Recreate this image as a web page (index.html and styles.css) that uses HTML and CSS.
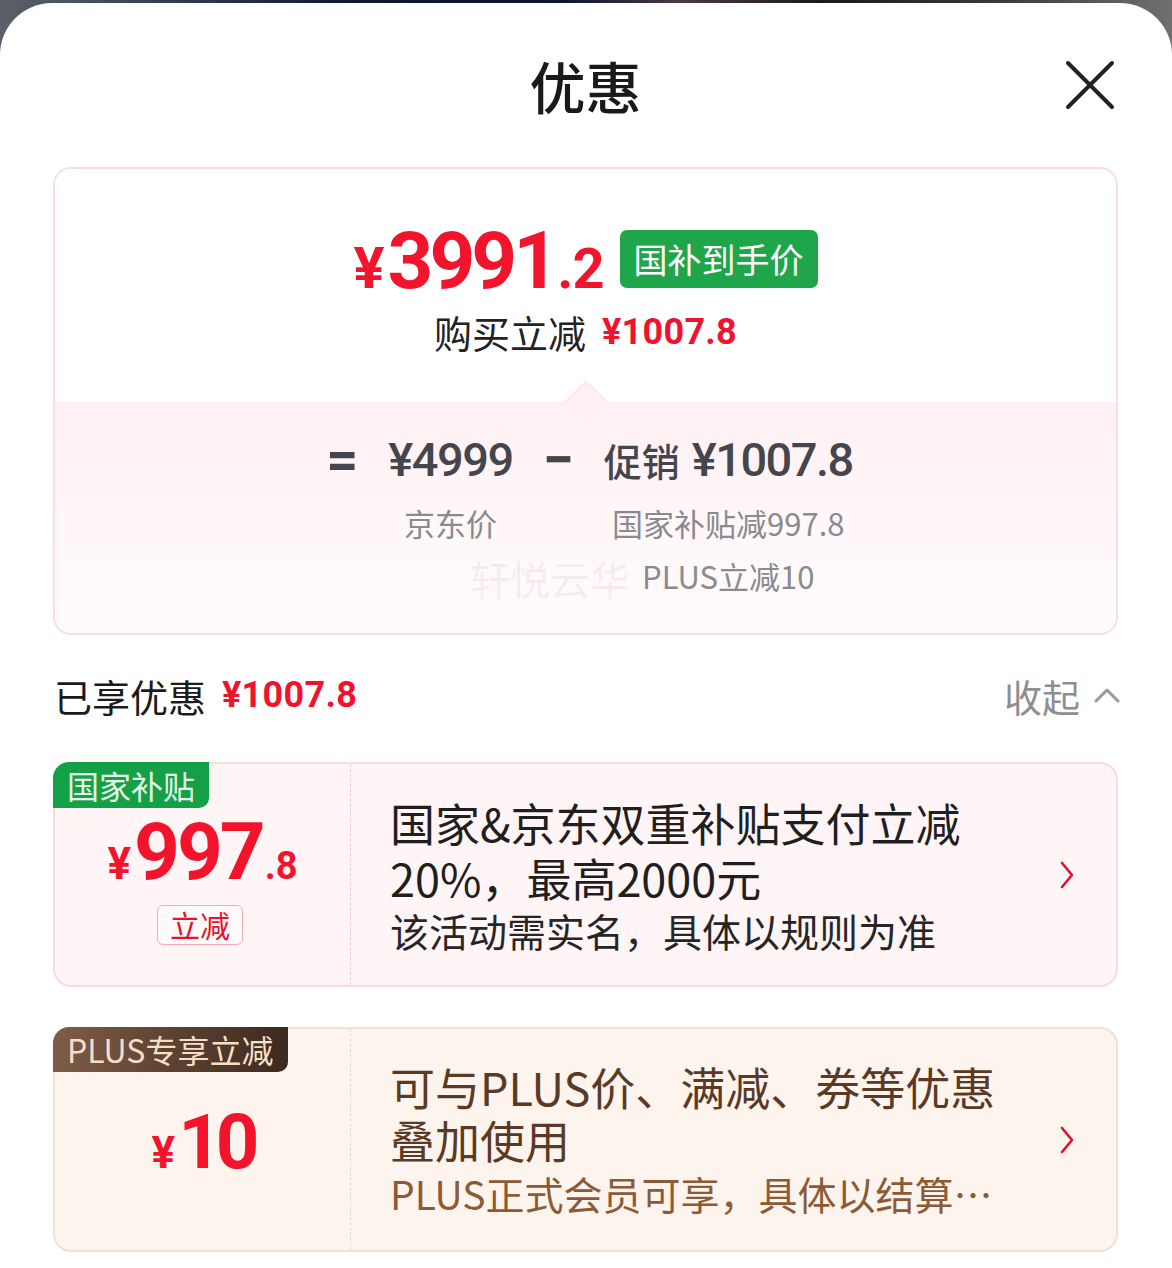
FILE: index.html
```html
<!DOCTYPE html>
<html lang="zh-CN">
<head>
<meta charset="utf-8">
<title>优惠</title>
<link rel="stylesheet" href="styles.css">
</head>
<body>
<div class="sheet">
  <header class="header">
    <span class="header-spacer"></span>
    <h1 class="title">优惠</h1>
    <button class="close" aria-label="关闭">
      <svg width="50" height="50" viewBox="0 0 50 50"><path d="M3 3 L47 47 M47 3 L3 47" stroke="#222" stroke-width="4" stroke-linecap="round" fill="none"/></svg>
    </button>
  </header>

  <section class="summary">
    <div class="summary-top">
      <div class="final">
        <span class="final-price"><span class="yen">¥</span><span class="int">3991</span><span class="dec">.2</span></span>
        <span class="final-badge">国补到手价</span>
      </div>
      <div class="saving">购买立减<span class="red-price">¥1007.8</span></div>
    </div>
    <div class="summary-bottom">
      <div class="formula">
        <span class="op">=</span>
        <div class="term">
          <div class="term-main">¥4999</div>
          <div class="term-note">京东价</div>
        </div>
        <span class="op">−</span>
        <div class="term">
          <div class="term-main"><span class="cn">促销</span>¥1007.8</div>
          <div class="term-note">国家补贴减997.8</div>
          <div class="term-note">PLUS立减10</div>
        </div>
      </div>
      <span class="watermark">轩悦云华</span>
    </div>
  </section>

  <div class="enjoyed">
    <div class="enjoyed-label">已享优惠<span class="red-price">¥1007.8</span></div>
    <div class="collapse">收起
      <svg width="26" height="18" viewBox="0 0 26 18"><path d="M2 15 L13 4 L24 15" stroke="#9a9a9a" stroke-width="3" fill="none" stroke-linecap="round" stroke-linejoin="round"/></svg>
    </div>
  </div>

  <div class="coupon coupon-gov">
    <span class="coupon-tag">国家补贴</span>
    <div class="coupon-left">
      <div class="coupon-amount"><span class="yen">¥</span><span class="int">997</span><span class="dec">.8</span></div>
      <span class="coupon-type">立减</span>
    </div>
    <div class="coupon-body">
      <div class="coupon-title">国家&amp;京东双重补贴支付立减<br>20%，最高2000元</div>
      <div class="coupon-desc">该活动需实名，具体以规则为准</div>
    </div>
    <svg class="chev" width="18" height="30" viewBox="0 0 18 30"><path d="M4 3 L14 15 L4 27" stroke="#e0102a" stroke-width="2.6" fill="none" stroke-linecap="round" stroke-linejoin="round"/></svg>
  </div>

  <div class="coupon coupon-plus">
    <span class="coupon-tag">PLUS专享立减</span>
    <div class="coupon-left">
      <div class="coupon-amount"><span class="yen">¥</span><span class="int">10</span></div>
    </div>
    <div class="coupon-body">
      <div class="coupon-title">可与PLUS价、满减、券等优惠<br>叠加使用</div>
      <div class="coupon-desc">PLUS正式会员可享，具体以结算…</div>
    </div>
    <svg class="chev" width="18" height="30" viewBox="0 0 18 30"><path d="M4 3 L14 15 L4 27" stroke="#e0102a" stroke-width="2.6" fill="none" stroke-linecap="round" stroke-linejoin="round"/></svg>
  </div>
</div>
</body>
</html>
```

FILE: styles.css
```css
* { box-sizing: border-box; }

html, body {
  margin: 0;
  height: 100%;
}

body {
  overflow: hidden;
  font-family: "Noto Sans CJK SC", "Noto Sans", sans-serif;
  background: linear-gradient(90deg, #5b6069 0%, #3a4256 12%, #0e1733 30%, #0c1530 48%, #4b3a44 58%, #1a1a1c 70%, #3a3a3a 85%, #707070 100%);
}

.sheet {
  margin-top: 3px;
  min-height: calc(100vh - 3px);
  background: #fff;
  border-radius: 52px 52px 0 0;
  padding: 0 54px 0 53px;
}

/* header */
.header {
  height: 164px;
  display: grid;
  grid-template-columns: 1fr auto 1fr;
  align-items: center;
}

.title {
  margin: 0;
  font-size: 56px;
  font-weight: 500;
  line-height: 1;
  color: #1a1a1a;
}

.close {
  justify-self: end;
  margin-right: 3px;
  width: 50px;
  height: 50px;
  padding: 0;
  border: 0;
  background: none;
  display: flex;
}

/* summary card */
.summary {
  border: 2px solid #fbdde3;
  border-radius: 18px;
  overflow: hidden;
}

.summary-top {
  display: flex;
  flex-direction: column;
  align-items: center;
  padding: 48px 0 50px;
  gap: 11px;
  background: #fff;
}

.final {
  display: flex;
  align-items: center;
  gap: 16px;
}

.final-price {
  display: flex;
  align-items: baseline;
  padding-top: 4px;
  font-family: Roboto, "Liberation Sans", sans-serif;
  font-weight: 700;
  color: #f2142d;
  line-height: 1;
  white-space: nowrap;
}

.final-price .yen { font-size: 58px; margin-right: 3px; }
.final-price .int { font-size: 80px; letter-spacing: -4px; }
.final-price .dec { font-size: 56px; letter-spacing: -1px; margin-left: 2px; }

.final-badge {
  display: flex;
  align-items: center;
  height: 58px;
  padding: 0 14px;
  border-radius: 7px;
  background: #1fa64a;
  color: #fff;
  font-size: 34px;
  line-height: 1;
}

.saving {
  font-size: 38px;
  line-height: 40px;
  color: #222;
  display: flex;
  align-items: center;
}

.red-price {
  font-family: Roboto, "Liberation Sans", sans-serif;
  font-weight: 700;
  color: #ef132d;
  font-size: 36px;
  letter-spacing: 0.3px;
  margin-left: 16px;
}

.summary-bottom {
  position: relative;
  background: linear-gradient(180deg, #fff0f3 0%, #fff8f9 60%, #fffbfb 100%);
  padding: 33px 0 37px;
}

.summary-bottom::before {
  content: "";
  position: absolute;
  left: 50%;
  top: -15px;
  width: 30px;
  height: 30px;
  transform: translateX(-50%) rotate(45deg);
  background: #fff0f3;
  border-top: 1.5px solid #fcdde4;
  border-left: 1.5px solid #fcdde4;
}

.formula {
  display: flex;
  justify-content: center;
  align-items: flex-start;
  gap: 30px;
  color: #45454d;
  padding-left: 8px;
}

.op {
  font-family: Roboto, "Liberation Sans", sans-serif;
  font-weight: 700;
  font-size: 56px;
  line-height: 50px;
}

.term {
  display: flex;
  flex-direction: column;
  align-items: center;
}

.term-main {
  font-family: Roboto, "Liberation Sans", sans-serif;
  font-weight: 500;
  font-size: 47px;
  line-height: 50px;
  letter-spacing: -1.5px;
  white-space: nowrap;
}

.term-main .cn {
  font-family: "Noto Sans CJK SC", sans-serif;
  font-size: 38px;
  letter-spacing: 0;
  margin-right: 12px;
}

.term-note {
  font-size: 31px;
  line-height: 40px;
  color: #8a8a90;
  margin-top: 13px;
}

.term-main + .term-note { margin-top: 18px; }

.watermark {
  position: absolute;
  left: 415px;
  top: 147px;
  font-size: 40px;
  color: rgba(120, 120, 120, 0.09);
  pointer-events: none;
}

/* enjoyed row */
.enjoyed {
  display: flex;
  justify-content: space-between;
  align-items: center;
  height: 40px;
  margin: 40px 0 47px;
}

.enjoyed-label {
  display: flex;
  align-items: center;
  font-size: 38px;
  color: #1a1a1a;
  padding-left: 1px;
}

.collapse {
  display: flex;
  align-items: center;
  gap: 14px;
  font-size: 38px;
  color: #8e8e8e;
  margin-right: -2px;
}

/* coupons */
.coupon {
  position: relative;
  display: flex;
  align-items: stretch;
  min-height: 225px;
  border: 2px solid #f8dbe1;
  border-radius: 18px;
  background: #fff5f7;
  margin-bottom: 40px;
}

.coupon-tag {
  position: absolute;
  top: -2px;
  left: -2px;
  height: 46px;
  padding: 0 14px;
  line-height: 46px;
  font-size: 32px;
  color: #e6f8ea;
  background: #14a046;
  border-radius: 16px 0 10px 0;
  white-space: nowrap;
}

.coupon-left {
  width: 296px;
  flex-shrink: 0;
  border-right: 1.5px dashed #f1cad1;
  display: flex;
  flex-direction: column;
  align-items: center;
  justify-content: center;
  gap: 13px;
  padding-top: 8px;
}

.coupon-amount {
  display: flex;
  align-items: baseline;
  font-family: Roboto, "Liberation Sans", sans-serif;
  font-weight: 700;
  color: #f2142d;
  line-height: 1;
  white-space: nowrap;
}

.coupon-amount .yen { font-size: 44px; margin-right: 3px; }
.coupon-amount .int { font-size: 80px; letter-spacing: -3px; }
.coupon-amount .dec { font-size: 38px; margin-left: 2px; }

.coupon-type {
  height: 40px;
  padding: 0 12px;
  line-height: 37px;
  font-size: 30px;
  color: #e5132b;
  background: #fffafa;
  border: 1.5px solid #f3abb5;
  border-radius: 6px;
  margin-right: 5px;
}

.coupon-body {
  flex: 1;
  padding-left: 39px;
  display: flex;
  flex-direction: column;
  justify-content: center;
}

.coupon-title {
  font-size: 45px;
  line-height: 55px;
  color: #1f1f1f;
}

.coupon-desc {
  font-size: 39px;
  line-height: 50px;
  color: #262626;
  white-space: nowrap;
}

.chev {
  align-self: center;
  margin-right: 40px;
  flex-shrink: 0;
}

/* PLUS coupon */
.coupon-plus {
  background: #fdf4ed;
  border-color: #f2e0d1;
}

.coupon-plus .coupon-tag {
  height: 45px;
  line-height: 45px;
  font-size: 32px;
  padding: 0 15px 0 14px;
  color: #f8dec6;
  background: linear-gradient(90deg, #7e5d48 0%, #5a4030 55%, #3c2a20 100%);
}

.coupon-plus .coupon-left {
  border-right-color: #ecd5c3;
  padding-top: 5px;
}

.coupon-plus .coupon-amount .int { font-size: 76px; letter-spacing: -6px; }

.coupon-plus .coupon-title {
  color: #5b3a25;
  line-height: 53px;
}

.coupon-plus .coupon-desc {
  color: #8c5b36;
  line-height: 54px;
}
```
